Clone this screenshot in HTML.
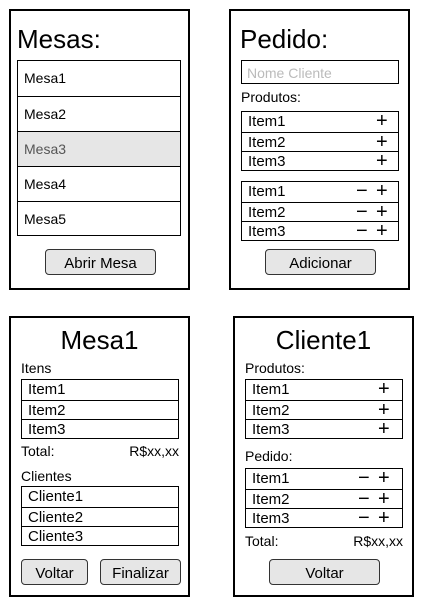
<!DOCTYPE html>
<html><head><style>
body{margin:0;width:429px;height:603px;background:#fff;position:relative;font-family:"Liberation Sans",Arial,sans-serif;color:#000;overflow:hidden}
.a{position:absolute;box-sizing:border-box}
.p{border:2px solid #000}
.t{font-size:26px;white-space:nowrap}
.s{font-size:14px;white-space:nowrap}
.box{border:1px solid #000}
.row{position:absolute;left:0;right:0;border-top:1px solid #000;font-size:15px;padding-left:6px;box-sizing:border-box}
.row:first-child{border-top:none}
.btn{background:#e6e6e6;border:1px solid #333;border-radius:4px;font-size:15px;text-align:center;line-height:27px}
.pm{position:absolute;font-size:20px;line-height:20px;top:-1px}
</style></head><body>
<!-- Panel 1 -->
<div class="a p" style="left:9px;top:9px;width:181px;height:281px"></div>
<div class="a t" style="left:17px;top:24px">Mesas:</div>
<div class="a box" style="left:17px;top:60px;width:164px;height:176px">
 <div class="row" style="top:0;height:35px;line-height:34px;font-size:14px">Mesa1</div>
 <div class="row" style="top:35px;height:35px;line-height:34px;font-size:14px">Mesa2</div>
 <div class="row" style="top:70px;height:35px;line-height:34px;font-size:14px;background:#e6e6e6;color:#555">Mesa3</div>
 <div class="row" style="top:105px;height:35px;line-height:34px;font-size:14px">Mesa4</div>
 <div class="row" style="top:140px;height:35px;line-height:34px;font-size:14px">Mesa5</div>
</div>
<div class="a btn" style="left:45px;top:249px;width:111px;height:26px">Abrir Mesa</div>

<!-- Panel 2 -->
<div class="a p" style="left:229px;top:9px;width:181px;height:281px"></div>
<div class="a t" style="left:240px;top:24px">Pedido:</div>
<div class="a box s" style="left:241px;top:60px;width:158px;height:24px;color:#bbb;padding-left:5px;line-height:24px">Nome Cliente</div>
<div class="a s" style="left:241px;top:89px">Produtos:</div>
<div class="a box" style="left:241px;top:111px;width:158px;height:60px">
 <div class="row" style="top:0;height:20px;line-height:20px">Item1<span class="pm" style="left:134px">+</span></div>
 <div class="row" style="top:20px;height:19px;line-height:19px">Item2<span class="pm" style="left:134px">+</span></div>
 <div class="row" style="top:39px;height:20px;line-height:20px">Item3<span class="pm" style="left:134px">+</span></div>
</div>
<div class="a box" style="left:241px;top:181px;width:158px;height:60px">
 <div class="row" style="top:0;height:20px;line-height:20px">Item1<span class="pm" style="left:114px">−</span><span class="pm" style="left:134px">+</span></div>
 <div class="row" style="top:20px;height:19px;line-height:19px">Item2<span class="pm" style="left:114px">−</span><span class="pm" style="left:134px">+</span></div>
 <div class="row" style="top:39px;height:20px;line-height:20px">Item3<span class="pm" style="left:114px">−</span><span class="pm" style="left:134px">+</span></div>
</div>
<div class="a btn" style="left:265px;top:249px;width:111px;height:26px">Adicionar</div>

<!-- Panel 3 -->
<div class="a p" style="left:9px;top:316px;width:181px;height:281px"></div>
<div class="a t" style="left:9px;width:181px;text-align:center;top:325px">Mesa1</div>
<div class="a s" style="left:21px;top:360px">Itens</div>
<div class="a box" style="left:21px;top:379px;width:158px;height:60px">
 <div class="row" style="top:0;height:20px;line-height:20px">Item1</div>
 <div class="row" style="top:20px;height:19px;line-height:19px">Item2</div>
 <div class="row" style="top:39px;height:20px;line-height:20px">Item3</div>
</div>
<div class="a s" style="left:21px;top:443px">Total:</div>
<div class="a s" style="left:100px;width:79px;text-align:right;top:443px">R$xx,xx</div>
<div class="a s" style="left:21px;top:468px">Clientes</div>
<div class="a box" style="left:21px;top:486px;width:158px;height:60px">
 <div class="row" style="top:0;height:20px;line-height:20px">Cliente1</div>
 <div class="row" style="top:20px;height:19px;line-height:19px">Cliente2</div>
 <div class="row" style="top:39px;height:20px;line-height:20px">Cliente3</div>
</div>
<div class="a btn" style="left:21px;top:559px;width:67px;height:26px">Voltar</div>
<div class="a btn" style="left:100px;top:559px;width:81px;height:26px">Finalizar</div>

<!-- Panel 4 -->
<div class="a p" style="left:233px;top:316px;width:181px;height:281px"></div>
<div class="a t" style="left:233px;width:181px;text-align:center;top:325px">Cliente1</div>
<div class="a s" style="left:245px;top:360px">Produtos:</div>
<div class="a box" style="left:245px;top:379px;width:158px;height:60px">
 <div class="row" style="top:0;height:20px;line-height:20px">Item1<span class="pm" style="left:132px">+</span></div>
 <div class="row" style="top:20px;height:19px;line-height:19px">Item2<span class="pm" style="left:132px">+</span></div>
 <div class="row" style="top:39px;height:20px;line-height:20px">Item3<span class="pm" style="left:132px">+</span></div>
</div>
<div class="a s" style="left:245px;top:448px">Pedido:</div>
<div class="a box" style="left:245px;top:468px;width:158px;height:60px">
 <div class="row" style="top:0;height:20px;line-height:20px">Item1<span class="pm" style="left:112px">−</span><span class="pm" style="left:132px">+</span></div>
 <div class="row" style="top:20px;height:19px;line-height:19px">Item2<span class="pm" style="left:112px">−</span><span class="pm" style="left:132px">+</span></div>
 <div class="row" style="top:39px;height:20px;line-height:20px">Item3<span class="pm" style="left:112px">−</span><span class="pm" style="left:132px">+</span></div>
</div>
<div class="a s" style="left:245px;top:533px">Total:</div>
<div class="a s" style="left:320px;width:83px;text-align:right;top:533px">R$xx,xx</div>
<div class="a btn" style="left:269px;top:559px;width:111px;height:26px">Voltar</div>
</body></html>
